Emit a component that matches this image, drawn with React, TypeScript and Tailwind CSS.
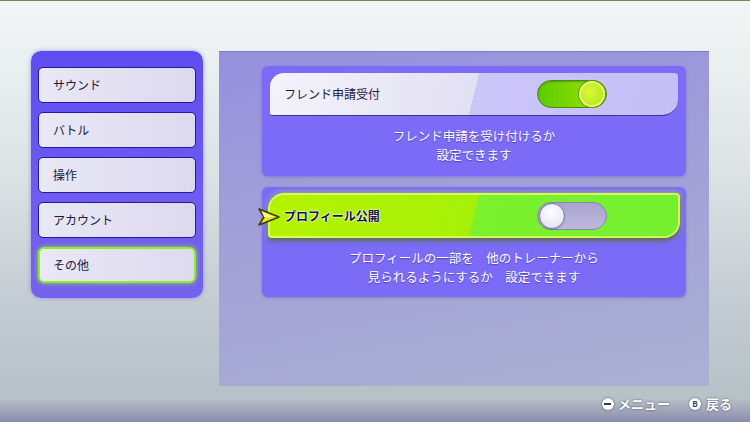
import React from 'react';

const font = { fontFamily: '"Noto Sans CJK JP", "Noto Sans", sans-serif' };

const menuItems = ['サウンド', 'バトル', '操作', 'アカウント', 'その他'];

function Toggle({ on }: { on: boolean }) {
  if (on) {
    return (
      <div className="w-[70px] h-[28px] rounded-full border border-[#4b8a14] bg-[linear-gradient(90deg,#5ccc00,#9fe400)] flex items-center justify-end p-[1px] shadow-[inset_0_1px_2px_rgba(0,0,0,0.25)]">
        <div className="w-[26px] h-[26px] rounded-full border-2 border-[#e4fb7a] bg-[radial-gradient(circle_at_40%_40%,#dcf83a,#b0e414)] shadow-[0_0_0_1px_#5a9a10]" />
      </div>
    );
  }
  return (
    <div className="w-[70px] h-[28px] rounded-full border border-[#8784b8] bg-[linear-gradient(180deg,#a8a4cf,#bdb9dd)] flex items-center justify-start p-[1px]">
      <div className="w-[26px] h-[26px] rounded-full border border-[#7d7aa8] bg-[radial-gradient(circle_at_45%_35%,#ffffff,#dcdcf0)] shadow-[0_1px_1px_rgba(0,0,0,0.2)]" />
    </div>
  );
}

function Chevron() {
  return (
    <svg width="24" height="20" viewBox="0 0 24 20" className="absolute left-[-13px] top-[12px]">
      <path d="M2 2 L22 10 L2 18 L7 10 Z" fill="#eee81a" stroke="#3a3a10" strokeWidth="1.5" strokeLinejoin="round" />
      <path d="M5 4.5 L17 10 L7 10 Z" fill="#fffa8a" />
    </svg>
  );
}

function SettingCard({
  title,
  lines,
  on,
  selected,
}: {
  title: string;
  lines: string[];
  on: boolean;
  selected?: boolean;
}) {
  return (
    <div className="w-[424px] h-[110px] rounded-[6px] bg-[#7b6bf6] flex flex-col shadow-[0_1px_3px_rgba(60,40,160,0.3)]">
      {selected ? (
        <div className="mx-[6px] mt-[6px] h-[45px] relative rounded-tl-[16px] rounded-br-[16px] rounded-tr-[4px] rounded-bl-[4px] border-2 border-[#d6fb5a] bg-[linear-gradient(104deg,#b4f200_0%,#a6f008_50%,#7cf12c_50%,#74f030_100%)] shadow-[0_3px_4px_rgba(40,70,0,0.55),0_0_6px_rgba(200,250,60,0.7)] flex items-center pl-[14px]">
          <Chevron />
          <span className="text-[12px] font-bold text-[#14143a] [text-shadow:0_0_2px_#fff,0_0_2px_#fff,0_0_1px_#fff]">{title}</span>
          <div className="ml-auto mr-[71px]">
            <Toggle on={on} />
          </div>
        </div>
      ) : (
        <div className="mx-[8px] mt-[7px] h-[43px] rounded-tl-[14px] rounded-br-[16px] rounded-tr-[4px] rounded-bl-[3px] border-b border-[#3b3490] bg-[linear-gradient(104deg,#f4f3fb_0%,#e2e0f3_50%,#cbc5f8_50%,#c6bff6_100%)] flex items-center pl-[14px]">
          <span className="text-[12px] font-normal text-[#1a1a40]">{title}</span>
          <div className="ml-auto mr-[71px]">
            <Toggle on={on} />
          </div>
        </div>
      )}
      <div className="flex-1 flex flex-col items-center justify-center pb-[2px] text-white text-[12.5px] leading-[19px] [text-shadow:0_1px_1px_rgba(40,30,120,0.5)]">
        {lines.map((l) => (
          <div key={l}>{l}</div>
        ))}
      </div>
    </div>
  );
}

export default function App() {
  return (
    <div
      className="w-[750px] h-[422px] overflow-hidden border-t border-[#8a7a5c] flex flex-col bg-[linear-gradient(180deg,#f2f6f6_0%,#dde3e5_40%,#c0cad0_75%,#b4bec6_100%)]"
      style={font}
    >
      <div className="flex items-start pt-[50px] pl-[31px] gap-[16px]">
        {/* Category menu */}
        <div className="w-[172px] rounded-[10px] bg-[linear-gradient(180deg,#5e4cf0,#6e5cf2_60%,#7462ee)] pt-[16px] pb-[15px] px-[7px] flex flex-col gap-[9px] shadow-[0_0_4px_rgba(110,90,240,0.6)]">
          {menuItems.map((item, i) => {
            const active = i === menuItems.length - 1;
            return (
              <div
                key={item}
                className={
                  active
                    ? 'h-[36px] rounded-[6px] border-2 border-[#8df01e] bg-[linear-gradient(90deg,#e9e8f5,#dddaee)] flex items-center pl-[13px] shadow-[0_0_5px_rgba(160,250,50,0.8)]'
                    : 'h-[36px] rounded-[5px] border border-[#241a9a] bg-[linear-gradient(90deg,#e9e8f5,#dcd9ee)] flex items-center pl-[14px]'
                }
              >
                <span className="text-[12px] font-normal text-[#1a1a40]">{item}</span>
              </div>
            );
          })}
        </div>

        {/* Settings panel */}
        <div className="w-[490px] h-[335px] bg-[linear-gradient(170deg,#9690de_0%,#a2a0d8_45%,#aab0d2_100%)] border-t border-[#8078c8] pt-[14px] pl-[43px] flex flex-col gap-[11px]">
          <SettingCard
            title="フレンド申請受付"
            lines={['フレンド申請を受け付けるか', '設定できます']}
            on
          />
          <SettingCard
            title="プロフィール公開"
            lines={['プロフィールの一部を　他のトレーナーから', '見られるようにするか　設定できます']}
            on={false}
            selected
          />
        </div>
      </div>

      {/* Button hints */}
      <div className="flex-1 flex items-center justify-end pr-[18px] gap-[19px] bg-[linear-gradient(180deg,rgba(0,0,0,0)_0%,rgba(0,0,0,0)_35%,#8c8cad_100%)] text-white text-[13px] font-bold [text-shadow:0_0_2px_rgba(30,30,60,0.8)]">
        <div className="flex items-center gap-[4px]">
          <div className="w-[12px] h-[12px] rounded-full bg-white flex items-center justify-center shadow-[0_0_2px_rgba(30,30,60,0.8)]">
            <div className="w-[7px] h-[2px] bg-[#3a3a50]" />
          </div>
          <span>メニュー</span>
        </div>
        <div className="flex items-center gap-[5px]">
          <div className="w-[12px] h-[12px] rounded-full bg-white flex items-center justify-center text-[8px] leading-none text-[#3a3a50] [text-shadow:none] shadow-[0_0_2px_rgba(30,30,60,0.8)]">
            B
          </div>
          <span>戻る</span>
        </div>
      </div>
    </div>
  );
}
